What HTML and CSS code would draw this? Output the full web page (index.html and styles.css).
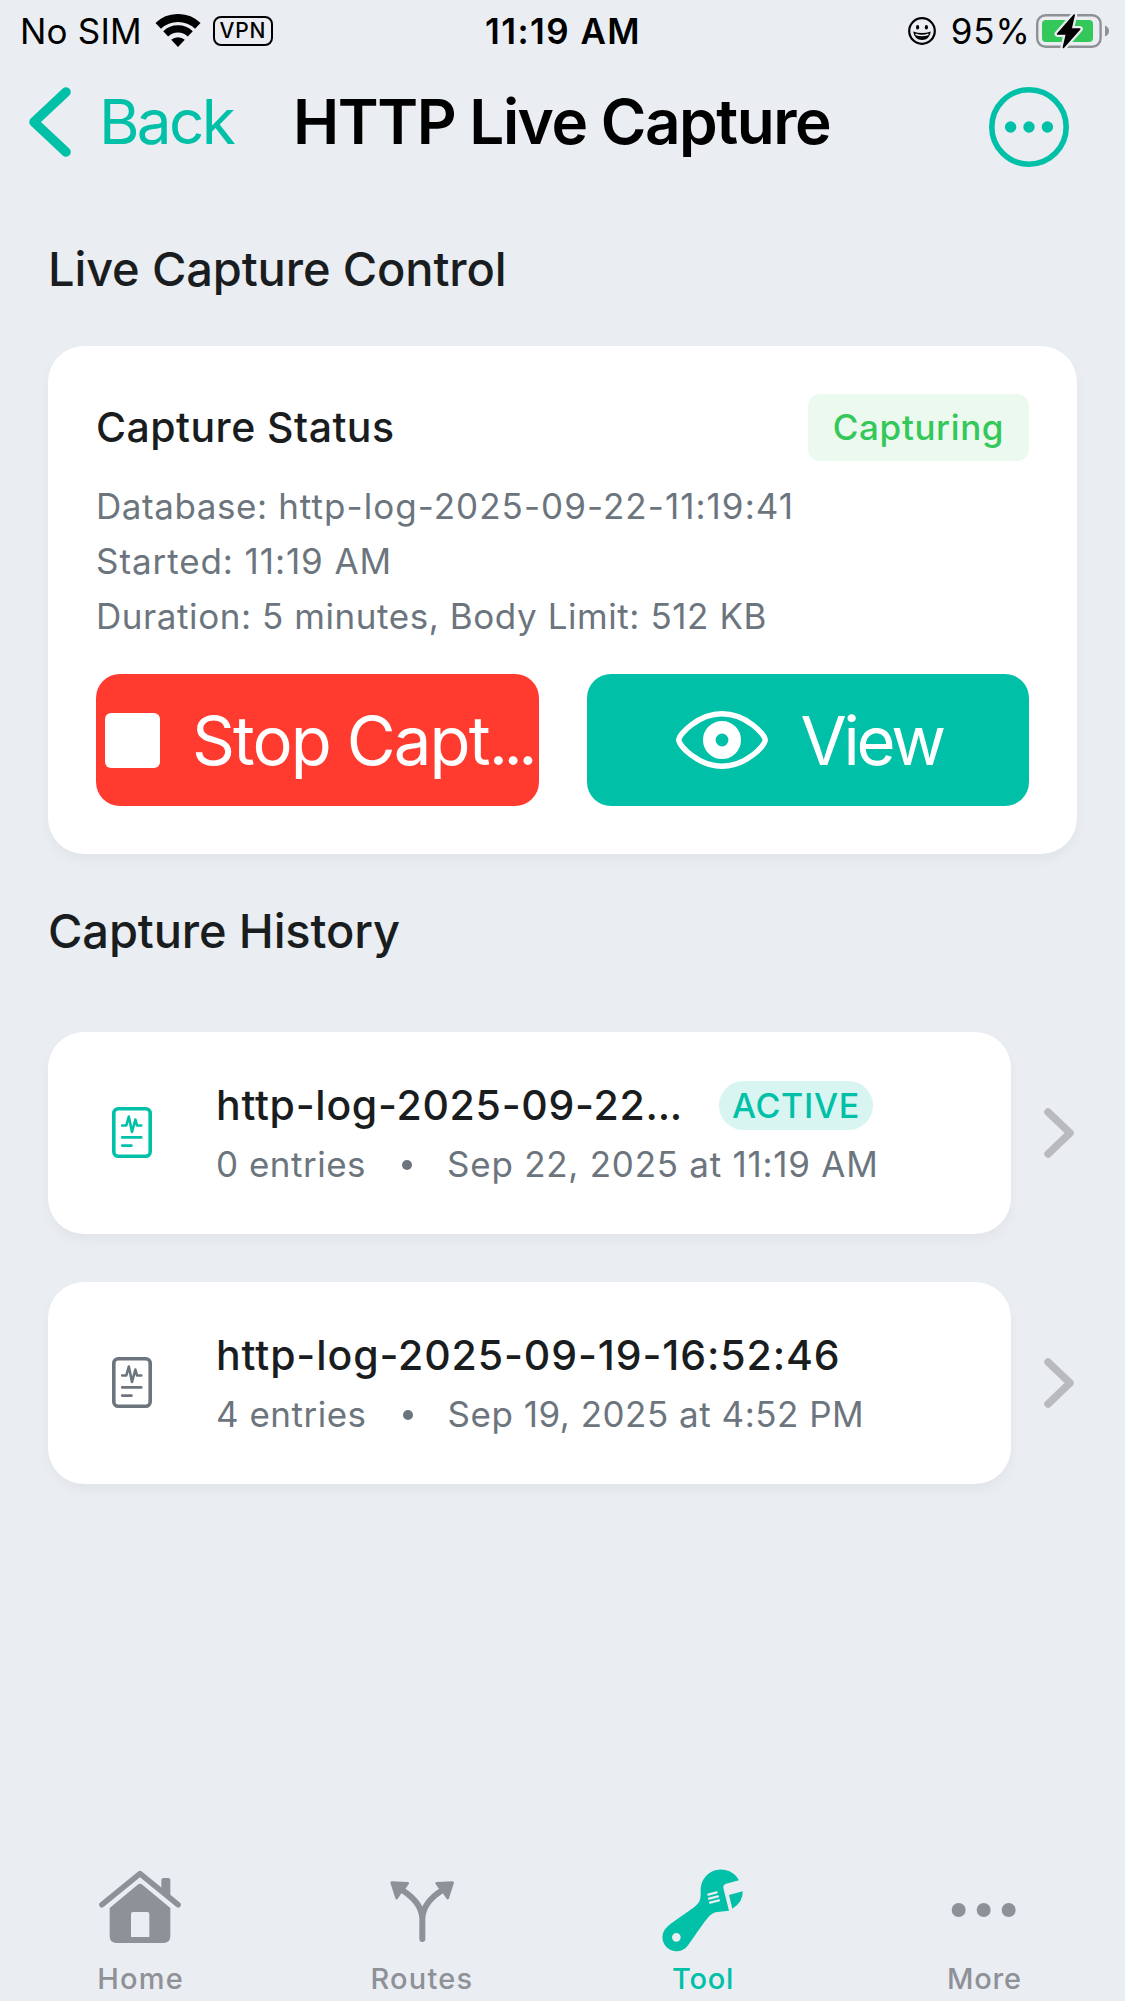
FILE: index.html
```html
<!DOCTYPE html>
<html lang="en">
<head>
    <meta charset="UTF-8">
    <meta name="viewport" content="width=device-width, initial-scale=1.0">
    <title>HTTP Live Capture</title>
    <link rel="stylesheet" href="styles.css">
</head>
<body>
    <div class="status-bar">
        <div class="status-left">
            <span class="carrier">No SIM</span>
            <svg class="wifi" viewBox="0 0 46 34">
                <path d="M3.2 11.8A29 29 0 0 1 42.8 11.8" fill="none" stroke="#000" stroke-width="8"/>
                <path d="M10.7 19.8A18 18 0 0 1 35.3 19.8" fill="none" stroke="#000" stroke-width="7.2"/>
                <path d="M23 33L16.2 25.8A10 10 0 0 1 29.8 25.8Z"/>
            </svg>
            <span class="vpn">VPN</span>
        </div>
        <span class="clock">11:19 AM</span>
        <div class="status-right">
            <svg class="face" viewBox="0 0 28 28">
                <circle cx="14" cy="14" r="12.8" fill="none" stroke="#000" stroke-width="2.2"/>
                <ellipse cx="9.6" cy="10.2" rx="1.6" ry="2.2"/>
                <ellipse cx="18.4" cy="10.2" rx="1.6" ry="2.2"/>
                <path d="M5.2 14.5Q14 17.5 22.8 14.5Q21.5 23 14 23Q6.5 23 5.2 14.5Z"/>
                <path d="M7.5 17.3Q14 19.8 20.5 17.3" fill="none" stroke="#eaedf2" stroke-width="1.5"/>
            </svg>
            <span class="percent">95%</span>
            <svg class="battery" viewBox="0 0 74 36">
                <rect x="1.2" y="2.2" width="63.4" height="31.6" rx="8.5" fill="none" stroke="#8f9295" stroke-width="2.4"/>
                <rect x="6" y="7" width="51" height="22" rx="4" fill="#34c759"/>
                <path d="M69 12.5Q73 14 73 18T69 23.5Z" fill="#8f9295"/>
                <path d="M38.2 2L21.5 21H30.5L27.4 34.5L43.8 16H35Z" stroke="#eaedf2" stroke-width="6" stroke-linejoin="round"/>
                <path d="M38.2 2L21.5 21H30.5L27.4 34.5L43.8 16H35Z" stroke="#000" stroke-width="1.5" stroke-linejoin="round"/>
            </svg>
        </div>
    </div>

    <header class="nav">
        <a class="back">
            <svg class="back-icon" viewBox="0 0 42 70">
                <path d="M37 5L5 35L37 65" fill="none" stroke="currentColor" stroke-width="9.5" stroke-linecap="round" stroke-linejoin="round"/>
            </svg>
            <span class="back-label">Back</span>
        </a>
        <h1 class="nav-title">HTTP Live Capture</h1>
        <svg class="nav-menu" viewBox="0 0 80 80">
            <circle cx="40" cy="40" r="37.2" fill="none" stroke="currentColor" stroke-width="5.6"/>
            <circle cx="21.6" cy="40" r="5.7" fill="currentColor"/>
            <circle cx="40" cy="40" r="5.7" fill="currentColor"/>
            <circle cx="58.4" cy="40" r="5.7" fill="currentColor"/>
        </svg>
    </header>

    <main>
        <h2>Live Capture Control</h2>
        <section class="card">
            <div class="card-header">
                <h3 class="status-title">Capture Status</h3>
                <span class="badge">Capturing</span>
            </div>
            <div class="details">
                <p>Database: <span class="database">http-log-2025-09-22-11:19:41</span></p>
                <p class="started">Started: 11:19 AM</p>
                <p>Duration: 5 minutes, Body Limit: 512 KB</p>
            </div>
            <div class="actions">
                <button class="btn btn-stop">
                    <i class="stop-icon"></i>
                    <span class="stop-label">Stop Capt<span class="dots">...</span></span>
                </button>
                <button class="btn btn-view">
                    <svg class="eye" viewBox="0 0 92 58">
                        <path d="M2.8 29C2.8 23.5 22 2.8 46 2.8S89.2 23.5 89.2 29S70 55.2 46 55.2S2.8 34.5 2.8 29Z" fill="none" stroke="currentColor" stroke-width="5.5"/>
                        <circle cx="46" cy="29" r="12.7" fill="none" stroke="currentColor" stroke-width="12.6"/>
                    </svg>
                    <span class="view-label">View</span>
                </button>
            </div>
        </section>

        <h2 class="history-title">Capture History</h2>
        <div class="history">
            <div class="row">
                <div class="entry">
                    <svg class="doc active" viewBox="0 0 40 51">
                        <rect x="1.8" y="1.8" width="36.4" height="47.4" rx="4.5" stroke-width="3.6"/>
                        <path d="M10.2 18.5H14.3L16.8 9.5L20 25L23.4 12.5L25 18.5H29.3M10.2 30.4H29.3M10.2 38.6H19.5" stroke-width="2.6"/>
                    </svg>
                    <div class="entry-text">
                        <div class="entry-top">
                            <span class="name cut">http-log-2025-09-22<span class="dots">...</span></span>
                            <span class="pill">ACTIVE</span>
                        </div>
                        <div class="meta"><span>0 entries</span><i class="dot"></i><span class="date">Sep 22, 2025 at 11:19 AM</span></div>
                    </div>
                </div>
                <svg class="chevron" viewBox="0 0 30 50">
                    <path d="M4 4L26 25L4 46" fill="none" stroke="#b8babf" stroke-width="7.5" stroke-linecap="round" stroke-linejoin="round"/>
                </svg>
            </div>
            <div class="row">
                <div class="entry">
                    <svg class="doc" viewBox="0 0 40 51">
                        <rect x="1.8" y="1.8" width="36.4" height="47.4" rx="4.5" stroke-width="3.6"/>
                        <path d="M10.2 18.5H14.3L16.8 9.5L20 25L23.4 12.5L25 18.5H29.3M10.2 30.4H29.3M10.2 38.6H19.5" stroke-width="2.6"/>
                    </svg>
                    <div class="entry-text">
                        <div class="entry-top">
                            <span class="name">http-log-2025-09-19-16:52:46</span>
                        </div>
                        <div class="meta"><span>4 entries</span><i class="dot"></i><span>Sep 19, 2025 at 4:52 PM</span></div>
                    </div>
                </div>
                <svg class="chevron" viewBox="0 0 30 50">
                    <path d="M4 4L26 25L4 46" fill="none" stroke="#b8babf" stroke-width="7.5" stroke-linecap="round" stroke-linejoin="round"/>
                </svg>
            </div>
        </div>
    </main>

    <nav class="tab-bar">
        <a class="tab">
            <svg viewBox="107 45 270 270">
                <path d="M125 164L239 71L353 164" fill="none" stroke="currentColor" stroke-width="17" stroke-linecap="round" stroke-linejoin="round"/>
                <path d="M303 116V90Q303 84 309 84H324Q330 84 330 90V140Z" fill="currentColor"/>
                <path fill-rule="evenodd" d="M232 104Q239 98 246 104L330 174V258Q330 279 309 279H169Q148 279 148 258V174ZM218 186Q212 186 212 192V261H267V192Q267 186 261 186Z" fill="currentColor"/>
            </svg>
            <span class="tab-label wide">Home</span>
        </a>
        <a class="tab">
            <svg viewBox="951 45 270 270">
                <path d="M1087 267V205C1085 170 1058 140 1026 120M1087 205C1089 170 1115 140 1148 120" fill="none" stroke="currentColor" stroke-width="18" stroke-linecap="round"/>
                <path d="M995 98L1043 100L1031 117L1022 126L1010 144ZM1178 98L1130 100L1142 117L1151 126L1163 144Z" fill="currentColor" stroke="currentColor" stroke-width="8" stroke-linejoin="round"/>
            </svg>
            <span class="tab-label wide">Routes</span>
        </a>
        <a class="tab selected">
            <svg viewBox="114 45 270 270">
                <path fill-rule="evenodd" d="M357 91L318 101Q308 104 310 114L327 182L292 186Q276 188 263 204C240 232 220 265 203 287A42 42 0 1 1 142 230C165 210 205 187 229 166Q242 155 242 136V118A61 61 0 0 1 357 91ZM169 249A13 13 0 1 0 169 275A13 13 0 1 0 169 249Z" fill="currentColor"/>
                <path d="M327 135L368 124Q370 156 337 176Z" fill="currentColor"/>
                <path d="M265 134L290 127M267 146L294 139M270 158L297 151" stroke="#eaedf2" stroke-width="6.5" stroke-linecap="round"/>
            </svg>
            <span class="tab-label">Tool</span>
        </a>
        <a class="tab">
            <svg viewBox="957 45 270 270" fill="currentColor">
                <circle cx="1016" cy="180" r="21"/>
                <circle cx="1091" cy="180" r="21"/>
                <circle cx="1166" cy="180" r="21"/>
            </svg>
            <span class="tab-label">More</span>
        </a>
    </nav>
</body>
</html>
```
FILE: styles.css
```css
* {
    box-sizing: border-box;
    margin: 0;
    padding: 0;
}
body {
    font-family: Inter, sans-serif;
    background-color: #eaedf2;
    min-height: 2001px;
    display: flex;
    flex-direction: column;
    color: #1a1d20;
    white-space: nowrap;
}
svg {
    display: block;
    flex: none;
}
.status-bar {
    height: 62px;
    padding: 0 15px 0 20px;
    display: grid;
    grid-template-columns: 1fr auto 1fr;
    align-items: center;
    font-size: 35px;
    color: #000;
}
.status-left, .status-right {
    display: flex;
    align-items: center;
}
.status-right {
    justify-content: flex-end;
}
.carrier {
    letter-spacing: 0.2px;
}
.wifi {
    width: 46px;
    height: 34px;
    margin-left: 13px;
}
.vpn {
    width: 60px;
    height: 30px;
    margin-left: 12px;
    border: 2px solid #000;
    border-radius: 8px;
    font-size: 21px;
    font-weight: 500;
    line-height: 26px;
    letter-spacing: 0.8px;
    text-align: center;
}
.clock {
    margin-right: 4px;
    font-weight: 600;
    letter-spacing: 1.45px;
}
.face {
    width: 28px;
    height: 28px;
    margin-right: 15px;
}
.percent {
    letter-spacing: 1px;
}
.battery {
    width: 74px;
    height: 36px;
    margin-left: 5px;
}
.nav {
    height: 119px;
    padding: 0 56px 0 29px;
    display: grid;
    grid-template-columns: 264px auto 1fr;
    align-items: center;
    color: #00c0a8;
}
.back {
    display: flex;
    align-items: center;
    gap: 28px;
    font-size: 62px;
}
.back-label {
    letter-spacing: -2.7px;
}
.back-icon {
    width: 42px;
    height: 70px;
}
.nav-title {
    font-size: 62px;
    font-weight: 600;
    letter-spacing: -1.48px;
    color: #000;
}
.nav-menu {
    width: 80px;
    height: 80px;
    margin-top: 11px;
    justify-self: end;
}
main {
    padding: 58px 48px 0;
}
h2 {
    font-size: 47px;
    font-weight: 500;
    line-height: 60px;
    letter-spacing: -0.14px;
}
.card {
    margin-top: 47px;
    padding: 48px;
    height: 508px;
    background: #fff;
    border-radius: 36px;
    box-shadow: 0 6px 12px rgba(0, 0, 0, 0.04);
}
.card-header {
    display: flex;
    justify-content: space-between;
    height: 67px;
}
.status-title {
    font-size: 41px;
    font-weight: 500;
    line-height: 66px;
    letter-spacing: 0.46px;
}
.badge {
    width: 221px;
    line-height: 67px;
    text-align: center;
    font-size: 35px;
    font-weight: 500;
    letter-spacing: 0.63px;
    color: #34c759;
    background: #ebf9ee;
    border-radius: 12px;
}
.details {
    margin-top: 18px;
    font-size: 35px;
    line-height: 55px;
    letter-spacing: 0.57px;
    color: #6c757d;
}
.database {
    letter-spacing: 1.05px;
}
.started {
    letter-spacing: 0.92px;
}
.actions {
    display: grid;
    grid-template-columns: repeat(2, minmax(0, 1fr));
    gap: 48px;
    margin-top: 30px;
}
.btn {
    height: 132px;
    display: flex;
    align-items: center;
    border: none;
    border-radius: 24px;
    font-family: inherit;
    font-size: 67px;
    color: #fff;
}
.btn-stop {
    padding-left: 9px;
    background: #ff3b30;
}
.btn-view {
    padding-left: 89px;
    background: #00c0a8;
}
.stop-icon {
    flex: none;
    width: 55px;
    height: 55px;
    border-radius: 6px;
    background: #fff;
}
.stop-label {
    margin-left: 32px;
    letter-spacing: -1.9px;
}
.stop-label .dots {
    letter-spacing: -4.5px;
}
.eye {
    width: 92px;
    height: 58px;
}
.view-label {
    margin-left: 33px;
    letter-spacing: -3.2px;
}
.history-title {
    margin-top: 47px;
}
.history {
    margin-top: 71px;
    display: flex;
    flex-direction: column;
    gap: 48px;
}
.row {
    display: flex;
    align-items: center;
}
.entry {
    width: 963px;
    height: 202px;
    padding: 49px 64px 0;
    display: flex;
    background: #fff;
    border-radius: 36px;
    box-shadow: 0 6px 12px rgba(0, 0, 0, 0.04);
}
.doc {
    width: 40px;
    height: 51px;
    margin: 26px 64px 0 0;
    fill: none;
    stroke: #6c757d;
    stroke-linecap: round;
    stroke-linejoin: round;
}
.doc.active {
    stroke: #00c0a8;
}
.entry-top {
    display: flex;
    height: 49px;
}
.name {
    font-size: 41px;
    font-weight: 500;
    line-height: 48px;
    letter-spacing: 0.9px;
}
.name.cut {
    letter-spacing: 0.72px;
}
.name .dots {
    letter-spacing: -0.3px;
}
.pill {
    width: 154px;
    margin-left: 37px;
    line-height: 49px;
    text-align: center;
    font-size: 34px;
    font-weight: 500;
    letter-spacing: 0.7px;
    color: #00c0a8;
    background: #d9f5f1;
    border-radius: 25px;
}
.meta {
    display: flex;
    align-items: center;
    margin-top: 7px;
    font-size: 35px;
    line-height: 55px;
    letter-spacing: 0.5px;
    color: #6c757d;
}
.date {
    letter-spacing: 0.74px;
}
.dot {
    width: 10px;
    height: 10px;
    margin: 0 35px 0 36px;
    border-radius: 50%;
    background: #6c757d;
}
.chevron {
    width: 30px;
    height: 50px;
    margin-left: 33px;
}
.tab-bar {
    margin-top: auto;
    height: 136px;
    display: grid;
    grid-template-columns: repeat(4, 1fr);
    color: #8e9197;
}
.tab {
    display: flex;
    flex-direction: column;
    align-items: center;
}
.tab svg {
    width: 90px;
    height: 90px;
    margin-bottom: 6px;
}
.tab-label {
    font-size: 29px;
    font-weight: 500;
    line-height: 36px;
    letter-spacing: 0.8px;
}
.tab-label.wide {
    letter-spacing: 1.2px;
}
.selected {
    color: #00c0a8;
}
```
